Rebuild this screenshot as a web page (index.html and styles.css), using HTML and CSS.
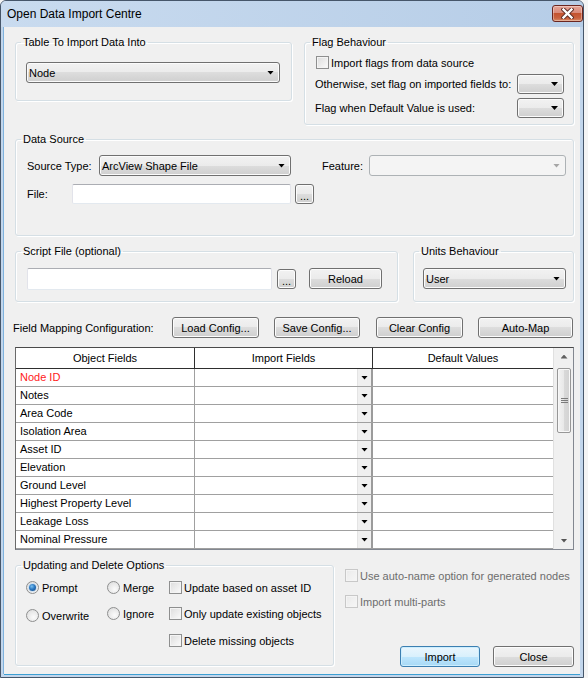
FILE: index.html
```html
<!DOCTYPE html>
<html>
<head>
<meta charset="utf-8">
<title>Open Data Import Centre</title>
<link rel="stylesheet" href="styles.css">
</head>
<body>
<div class="window">
  <div class="titlebar">
    <span class="title">Open Data Import Centre</span>
    <div class="close-btn">
      <svg width="13" height="11" viewBox="0 0 13 11">
        <path d="M2.5 1.5 L10.5 9.5 M10.5 1.5 L2.5 9.5" stroke="#5b2a24" stroke-width="4.2" stroke-linecap="square" fill="none"/>
        <path d="M2.5 1.5 L10.5 9.5 M10.5 1.5 L2.5 9.5" stroke="#ffffff" stroke-width="2.4" stroke-linecap="square" fill="none"/>
      </svg>
    </div>
  </div>
  <div class="client">
    <div class="row row-top">
      <fieldset class="grp grp-table">
        <legend>Table To Import Data Into</legend>
        <div class="body body-table">
          <div class="combo w-table"><span class="combo-text">Node</span><span class="arrow"></span></div>
        </div>
      </fieldset>
      <fieldset class="grp grp-flag">
        <legend>Flag Behaviour</legend>
        <div class="body body-flag">
          <div class="check-row"><span class="check"></span><span class="check-label">Import flags from data source</span></div>
          <div class="flag-row flag-row1"><span>Otherwise, set flag on imported fields to:</span><div class="combo w-flag"><span class="arrow"></span></div></div>
          <div class="flag-row flag-row2"><span>Flag when Default Value is used:</span><div class="combo w-flag"><span class="arrow"></span></div></div>
        </div>
      </fieldset>
    </div>

    <div class="row row-data">
      <fieldset class="grp grp-data">
        <legend>Data Source</legend>
        <div class="body body-data">
          <div class="data-line">
            <span class="lbl lbl-source">Source Type:</span>
            <div class="combo w-source"><span class="combo-text">ArcView Shape File</span><span class="arrow"></span></div>
            <span class="lbl lbl-feature">Feature:</span>
            <div class="combo combo-disabled w-feature"><span class="arrow arrow-gray"></span></div>
          </div>
          <div class="data-line data-line2">
            <span class="lbl lbl-file">File:</span>
            <div class="textbox w-file"></div>
            <div class="btn btn-dots btn-dots-file">...</div>
          </div>
        </div>
      </fieldset>
    </div>

    <div class="row row-script">
      <fieldset class="grp grp-script">
        <legend>Script File (optional)</legend>
        <div class="body body-script">
          <div class="textbox w-script"></div>
          <div class="btn btn-dots btn-dots-script">...</div>
          <div class="btn btn-reload">Reload</div>
        </div>
      </fieldset>
      <fieldset class="grp grp-units">
        <legend>Units Behaviour</legend>
        <div class="body body-units">
          <div class="combo w-units"><span class="combo-text">User</span><span class="arrow"></span></div>
        </div>
      </fieldset>
    </div>

    <div class="row row-map">
      <span class="map-label">Field Mapping Configuration:</span>
      <div class="btn btn-load">Load Config...</div>
      <div class="btn btn-save">Save Config...</div>
      <div class="btn btn-clear">Clear Config</div>
      <div class="btn btn-auto">Auto-Map</div>
    </div>

    <div class="row row-grid">
      <div class="grid">
        <div class="grid-main">
          <div class="grid-head">
            <div class="gh c1">Object Fields</div>
            <div class="gh c2">Import Fields</div>
            <div class="gh c3">Default Values</div>
          </div>
          <div class="grid-body">
            <div class="grid-row"><div class="gc c1 req">Node ID</div><div class="gc c2"><span class="dd"><span class="arrow"></span></span></div><div class="gc c3"></div></div>
            <div class="grid-row"><div class="gc c1">Notes</div><div class="gc c2"><span class="dd"><span class="arrow"></span></span></div><div class="gc c3"></div></div>
            <div class="grid-row"><div class="gc c1">Area Code</div><div class="gc c2"><span class="dd"><span class="arrow"></span></span></div><div class="gc c3"></div></div>
            <div class="grid-row"><div class="gc c1">Isolation Area</div><div class="gc c2"><span class="dd"><span class="arrow"></span></span></div><div class="gc c3"></div></div>
            <div class="grid-row"><div class="gc c1">Asset ID</div><div class="gc c2"><span class="dd"><span class="arrow"></span></span></div><div class="gc c3"></div></div>
            <div class="grid-row"><div class="gc c1">Elevation</div><div class="gc c2"><span class="dd"><span class="arrow"></span></span></div><div class="gc c3"></div></div>
            <div class="grid-row"><div class="gc c1">Ground Level</div><div class="gc c2"><span class="dd"><span class="arrow"></span></span></div><div class="gc c3"></div></div>
            <div class="grid-row"><div class="gc c1">Highest Property Level</div><div class="gc c2"><span class="dd"><span class="arrow"></span></span></div><div class="gc c3"></div></div>
            <div class="grid-row"><div class="gc c1">Leakage Loss</div><div class="gc c2"><span class="dd"><span class="arrow"></span></span></div><div class="gc c3"></div></div>
            <div class="grid-row"><div class="gc c1">Nominal Pressure</div><div class="gc c2"><span class="dd"><span class="arrow"></span></span></div><div class="gc c3"></div></div>
            <div class="grid-row"><div class="gc c1"></div><div class="gc c2"><span class="dd"><span class="arrow"></span></span></div><div class="gc c3"></div></div>
          </div>
        </div>
        <div class="vscroll">
          <div class="sb-btn"><span class="arrow arrow-up"></span></div>
          <div class="sb-thumb"><span class="grip"></span></div>
          <div class="sb-spacer"></div>
          <div class="sb-btn"><span class="arrow arrow-sb"></span></div>
        </div>
      </div>
    </div>

    <div class="row row-bottom">
      <fieldset class="grp grp-update">
        <legend>Updating and Delete Options</legend>
        <div class="body body-update">
          <div class="opt"><span class="radio on"></span><span>Prompt</span></div>
          <div class="opt"><span class="radio"></span><span>Merge</span></div>
          <div class="opt"><span class="check"></span><span>Update based on asset ID</span></div>
          <div class="opt opt-low"><span class="radio"></span><span>Overwrite</span></div>
          <div class="opt"><span class="radio"></span><span>Ignore</span></div>
          <div class="opt"><span class="check"></span><span>Only update existing objects</span></div>
          <div class="opt"></div>
          <div class="opt"></div>
          <div class="opt"><span class="check"></span><span>Delete missing objects</span></div>
        </div>
      </fieldset>
      <div class="right-col">
        <div class="opt disabled opt-auto"><span class="check check-disabled"></span><span>Use auto-name option for generated nodes</span></div>
        <div class="opt disabled opt-multi"><span class="check check-disabled"></span><span>Import multi-parts</span></div>
        <div class="action-row">
          <div class="btn btn-default btn-import">Import</div>
          <div class="btn btn-close">Close</div>
        </div>
      </div>
    </div>
  </div>
</div>
</body>
</html>
```

FILE: styles.css
```css
* { box-sizing: border-box; }
html, body { margin: 0; padding: 0; }
body {
  background: #f4f4f4;
  font-family: "Liberation Sans", Arial, sans-serif;
  font-size: 11px;
  color: #000;
  width: 588px;
  height: 678px;
  overflow: hidden;
}

/* window frame */
.window {
  width: 584px;
  height: 678px;
  border: 1px solid #46566a;
  border-radius: 6px 6px 0 0;
  background: #c2d6ec;
  display: flex;
  flex-direction: column;
}
.titlebar {
  height: 26px;
  flex: none;
  display: flex;
  align-items: flex-start;
  justify-content: space-between;
  background: linear-gradient(to right, #c9dbef, #b6cde7);
  border-radius: 5px 5px 0 0;
}
.title {
  font-size: 12px;
  line-height: 14px;
  margin: 6px 0 0 6px;
}
.close-btn {
  width: 31px;
  height: 17px;
  margin-top: 4px;
  border: 1px solid #6b2620;
  border-radius: 3px;
  background: linear-gradient(#e6a597 0%, #d98a7a 45%, #c4532f 50%, #c9613f 80%, #d98c66 100%);
  display: flex;
  align-items: center;
  justify-content: center;
  box-shadow: inset 0 0 0 1px rgba(255,255,255,0.35);
}
.client {
  flex: 1;
  margin: 0 3px 3px 3px;
  background: #f0f0f0;
  padding: 9px 0 0 11px;
  box-shadow: 0 1px 0 #3c9fd3, -1px 0 0 #7fb2dd;
}

.row { display: flex; align-items: flex-start; }

/* group boxes */
.grp {
  margin: 0;
  padding: 0;
  border: 1px solid #d5dfe5;
  border-radius: 3px;
  min-width: 0;
  box-shadow: inset 1px 1px 0 #fff, 1px 1px 0 #fff;
}
.grp legend {
  padding: 0 2px;
  margin-left: 5px;
  line-height: 13px;
  height: 13px;
}
.body { display: flex; }

.row-top { gap: 12px; }
.grp-table { width: 277px; }
.grp-flag { width: 270px; }
.body-table { padding: 13px 10px 17px 10px; }
.body-flag { flex-direction: column; padding: 7px 9px 6px 10px; }
.check-row { display: flex; align-items: center; height: 13px; margin-left: 1px; }
.check-label { margin-left: 2px; }
.flag-row { display: flex; align-items: center; justify-content: space-between; height: 20px; }
.flag-row1 { margin-top: 5px; }
.flag-row2 { margin-top: 4px; }

/* combobox */
.combo {
  height: 21px;
  border: 1px solid #707070;
  border-radius: 3px;
  background: linear-gradient(#f2f2f2 0%, #ebebeb 50%, #dddddd 50%, #cfcfcf 100%);
  box-shadow: inset 0 0 0 1px #fbfbfb;
  display: flex;
  align-items: center;
  padding: 0 5px 0 2px;
}
.combo-text { flex: 1; white-space: nowrap; }
.combo .arrow { margin-left: auto; }
.w-table { width: 254px; }
.w-flag { width: 47px; height: 20px; }
.w-source { width: 192px; }
.w-feature { width: 197px; }
.w-units { width: 143px; }
.combo-disabled {
  border-color: #adb2b5;
  background: #f4f4f4;
  box-shadow: none;
}

.arrow {
  display: block;
  width: 7px;
  height: 4px;
  background: #000;
  clip-path: polygon(0 0, 100% 0, 50% 100%);
}
.arrow-gray { background: #a6a6a6; }
.arrow-up { clip-path: polygon(50% 0, 100% 100%, 0 100%); background: #606060; }
.arrow-sb { background: #555; }

/* data source */
.row-data { margin-top: 8px; }
.grp-data { width: 559px; }
.body-data { flex-direction: column; padding: 9px 6px 31px 11px; }
.data-line { display: flex; align-items: center; }
.data-line2 { margin-top: 8px; }
.lbl { white-space: nowrap; }
.lbl-source { width: 72px; }
.lbl-feature { width: 47px; margin-left: 31px; }
.lbl-file { width: 45px; }

.textbox {
  background: #fff;
  border: 1px solid #e2e3ea;
  border-top-color: #abadb3;
  border-bottom-color: #e3e9ef;
  border-radius: 2px;
}
.w-file { width: 219px; height: 20px; }
.w-script { width: 245px; height: 22px; }

/* buttons */
.btn {
  height: 21px;
  border: 1px solid #707070;
  border-radius: 3px;
  background: linear-gradient(#f2f2f2 0%, #ebebeb 50%, #dddddd 50%, #cfcfcf 100%);
  box-shadow: inset 0 0 0 1px #fcfcfc;
  display: flex;
  align-items: center;
  justify-content: center;
  white-space: nowrap;
}
.btn-dots { width: 19px; height: 20px; padding-top: 4px; letter-spacing: 0; }
.btn-dots-file { margin-left: 4px; }

.row-script { margin-top: 9px; gap: 15px; }
.grp-script { width: 383px; }
.grp-units { width: 161px; }
.body-script { align-items: flex-start; padding: 10px 0 11px 11px; }
.btn-dots-script { margin-left: 5px; margin-top: 1px; }
.btn-reload { width: 73px; margin-left: 13px; }
.body-units { padding: 10px 0 12px 9px; }

/* field mapping */
.row-map { margin-top: 15px; align-items: center; }
.map-label { width: 159px; margin-left: -2px; }
.btn-load { width: 87px; }
.btn-save { width: 86px; margin-left: 15px; }
.btn-clear { width: 87px; margin-left: 16px; }
.btn-auto { width: 95px; margin-left: 15px; }

/* grid */
.row-grid { margin-top: 9px; }
.grid {
  width: 559px;
  height: 203px;
  display: flex;
  background: #fff;
  border: 1px solid #828790;
  border-top-color: #4a4a4a;
  border-left-color: #6a6a6a;
}
.grid-main {
  width: 537px;
  display: flex;
  flex-direction: column;
  overflow: hidden;
}
.grid-head {
  display: flex;
  height: 21px;
  flex: none;
  border-bottom: 1px solid #2e2e2e;
}
.gh { display: flex; align-items: center; justify-content: center; padding-bottom: 1px; }
.c1 { width: 179px; flex: none; }
.c2 { width: 178px; flex: none; }
.c3 { width: 180px; flex: none; }
.grid-head .c1 { border-right: 1px solid #2e2e2e; }
.grid-head .c2 { border-right: 1px solid #2e2e2e; width: 178px; }
.grid-body { flex: 1; overflow: hidden; }
.grid-row {
  display: flex;
  height: 18px;
  border-bottom: 1px solid #a0a0a0;
}
.gc { display: flex; align-items: center; white-space: nowrap; }
.grid-row .c1 { border-right: 1px solid #a0a0a0; padding-left: 4px; padding-bottom: 1px; }
.grid-row .c2 { border-right: 2px solid #9b9b9b; justify-content: flex-end; }
.req { color: #ff1a1a; }
.dd {
  width: 14px;
  height: 100%;
  background: #f0f0f0;
  display: flex;
  align-items: center;
  justify-content: center;
  border-left: 1px solid #e4e4e4;
}

.vscroll {
  width: 20px;
  flex: none;
  background: #f0f0f0;
  border-left: 1px solid #e0e0e0;
  display: flex;
  flex-direction: column;
  padding-left: 3px;
}
.sb-btn {
  width: 14px;
  height: 17px;
  display: flex;
  align-items: center;
  justify-content: center;
  flex: none;
}
.sb-thumb {
  width: 14px;
  height: 65px;
  margin-top: 3px;
  border: 1px solid #979797;
  border-radius: 2px;
  background: linear-gradient(to right, #f3f3f3 0%, #e8e8e8 50%, #d9d9d9 50%, #d2d2d2 100%);
  box-shadow: inset 0 0 0 1px #f8f8f8;
  display: flex;
  align-items: center;
  justify-content: center;
  flex: none;
}
.grip {
  width: 7px;
  height: 5px;
  background: repeating-linear-gradient(#7b7b7b 0 1px, transparent 1px 2px);
}
.sb-spacer { flex: 1; }

/* bottom */
.row-bottom { margin-top: 9px; }
.grp-update { width: 319px; }
.body-update {
  display: grid;
  grid-template-columns: 81px 62px auto;
  grid-template-rows: 26px 27px 13px;
  padding: 9px 0 18px 10px;
}
.opt { display: flex; align-items: center; height: 13px; white-space: nowrap; }
.opt .radio { margin-right: 3px; }
.opt .check { margin-right: 2px; }
.opt-low { margin-top: 2px; }

.check {
  display: block;
  width: 13px;
  height: 13px;
  flex: none;
  border: 1px solid #8e8f8f;
  background: linear-gradient(135deg, #dcdcdc 0%, #f2f2f2 70%, #fbfbfb 100%);
  box-shadow: inset 0 0 0 1px #f4f4f4;
}
.check-disabled {
  border-color: #c8c8c8;
  background: linear-gradient(135deg, #eaeaea 0%, #f6f6f6 100%);
}
.radio {
  display: block;
  width: 13px;
  height: 13px;
  flex: none;
  border-radius: 50%;
  border: 1px solid #8e8f8f;
  background: radial-gradient(circle at 60% 65%, #fbfbfb 0%, #e9e9e9 55%, #d6d6d6 100%);
  position: relative;
}
.radio.on::after {
  content: "";
  position: absolute;
  left: 2px;
  top: 2px;
  width: 7px;
  height: 7px;
  border-radius: 50%;
  background: radial-gradient(circle at 40% 35%, #7cc0ef 0%, #2b79c2 45%, #0d3f7a 100%);
  box-shadow: 0 0 0 1px #cfdfee;
}
.disabled { color: #6d6d6d; }

.right-col {
  display: flex;
  flex-direction: column;
  margin-left: 11px;
  width: 229px;
}
.opt-auto { margin-top: 10px; }
.opt-multi { margin-top: 13px; }
.action-row {
  display: flex;
  justify-content: flex-end;
  margin-top: 38px;
}
.btn-import { width: 80px; }
.btn-close { width: 81px; margin-left: 13px; }
.btn-default {
  border-color: #3c7fb1;
  background: linear-gradient(#eaf6fd 0%, #d9f0fc 50%, #bee6fd 50%, #a7d9f5 100%);
  box-shadow: inset 0 0 0 1px #cdeefe;
}
```
